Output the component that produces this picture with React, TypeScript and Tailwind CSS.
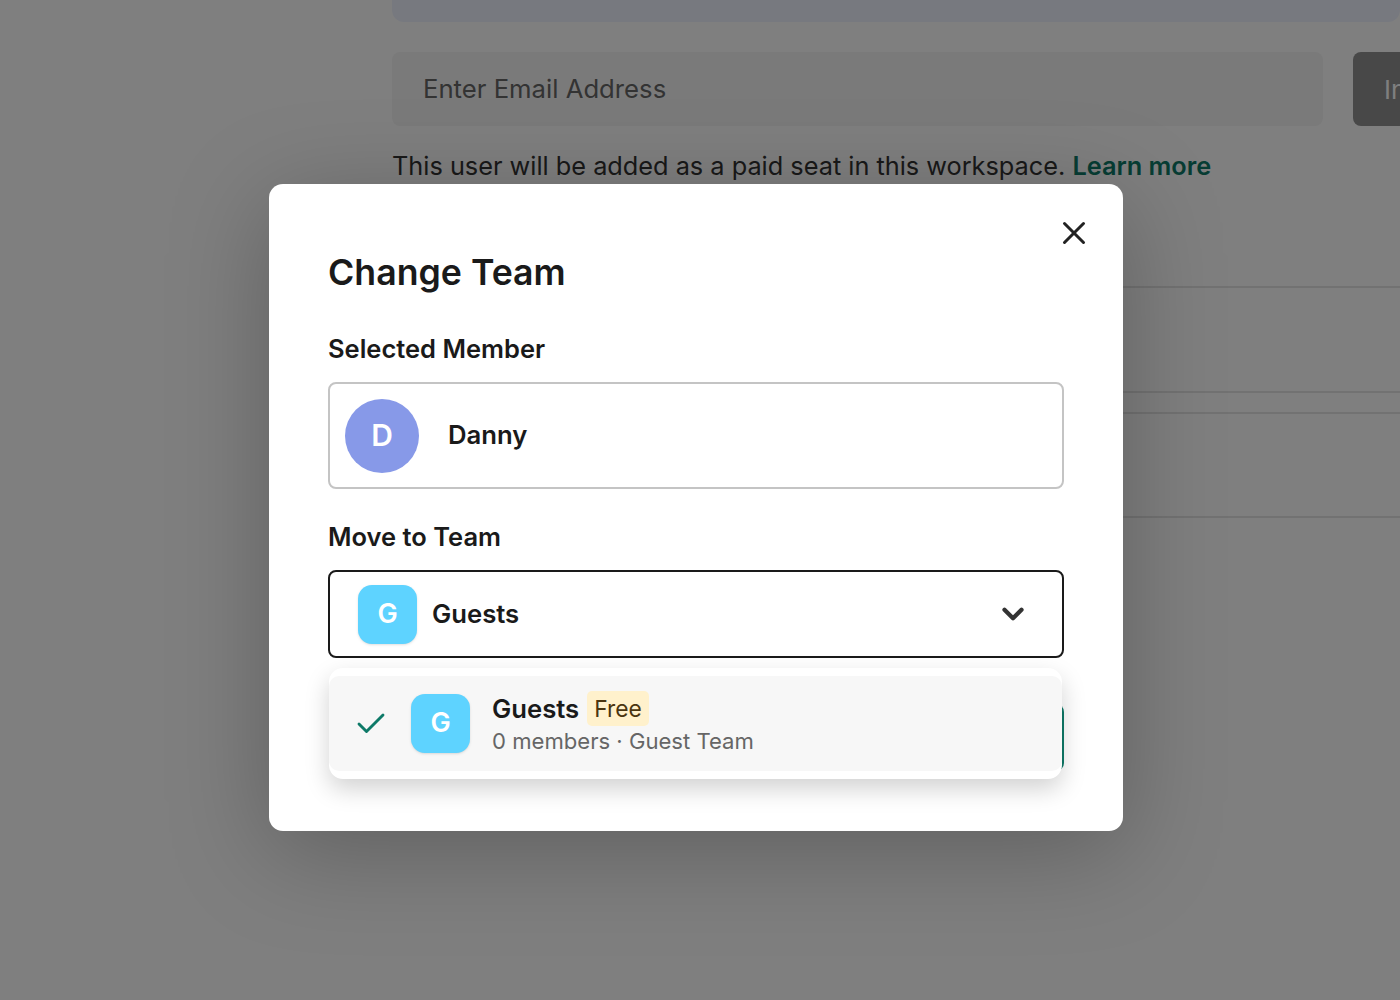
import { Check, ChevronDown, X } from "lucide-react";

const font = { fontFamily: "Inter, 'Liberation Sans', sans-serif" };

function TeamIcon() {
  return (
    <div className="flex h-[59px] w-[59px] shrink-0 items-center justify-center rounded-[14px] bg-[#5ed3ff] text-[27px] font-semibold text-white shadow-sm">
      G
    </div>
  );
}

export default function App() {
  return (
    <div className="relative h-[1000px] w-full overflow-hidden bg-white" style={font}>
      {/* page behind the overlay */}
      <div className="pl-[392px]">
        <div className="h-[22px] rounded-b-[12px] bg-[#eff3ff]" />
        <div className="mt-[30px] flex gap-[30px]">
          <div className="flex h-[74px] w-[931px] shrink-0 items-center rounded-[8px] bg-[#f5f5f5] pl-[31px] text-[25.7px] text-[#666]">
            Enter Email Address
          </div>
          <div className="flex h-[74px] flex-1 items-center overflow-hidden whitespace-nowrap rounded-l-[8px] bg-[#909090] pl-[31px] text-[26px] text-white">
            Invite
          </div>
        </div>
        <p className="mt-[23px] whitespace-nowrap text-[25.3px] leading-[34px] text-[#333]">
          This user will be added as a paid seat in this workspace.{" "}
          <span className="font-semibold text-[#0e7a68]">Learn more</span>
        </p>
        <div className="mt-[103px] h-[107px] border-y-2 border-[#e4e4e4]" />
        <div className="mt-[19px] h-[106px] border-y-2 border-[#e4e4e4]" />
      </div>

      {/* overlay + modal */}
      <div className="absolute inset-0 flex items-center justify-center bg-black/50 pr-2 pt-[15px]">
        <div className="relative h-[647px] w-[854px] rounded-[14px] bg-white px-[59px] pt-[64px] shadow-[0_20px_100px_rgba(0,0,0,0.25)]">
          <button className="absolute right-[30px] top-[30px] text-[#222]">
            <X size={38} strokeWidth={1.9} />
          </button>
          <h2 className="text-[35.7px] font-semibold leading-[48px] text-[#1a1a1a]">Change Team</h2>

          <div className="mt-[36px] text-[25.5px] font-semibold leading-[34px] text-[#1a1a1a]">Selected Member</div>
          <div className="mt-[16px] flex h-[107px] items-center rounded-[8px] border-2 border-[#c4c4c4] pl-[15px]">
            <div className="flex h-[74px] w-[74px] items-center justify-center rounded-full bg-[#8799e8] text-[30px] font-semibold text-white">
              D
            </div>
            <span className="ml-[29px] text-[25.7px] font-semibold text-[#1a1a1a]">Danny</span>
          </div>

          <div className="mt-[31px] text-[25.5px] font-semibold leading-[34px] text-[#1a1a1a]">Move to Team</div>
          <div className="relative mt-[16px]">
            <div className="flex h-[88px] items-center rounded-[8px] border-2 border-[#1a1a1a] pl-[28px] pr-[32px]">
              <TeamIcon />
              <span className="ml-[15px] flex-1 text-[25.7px] font-semibold text-[#1a1a1a]">Guests</span>
              <ChevronDown size={34} strokeWidth={3} className="text-[#333]" />
            </div>

            <div className="ml-[4px] mt-[46px] h-[67px] rounded-[8px] bg-[#0e7a68]" />

            {/* open dropdown */}
            <div className="absolute left-px right-[2px] top-[98px] rounded-[14px] bg-white py-[8px] shadow-[0_10px_24px_rgba(0,0,0,0.18)]">
              <div className="flex h-[95px] items-center rounded-[10px] bg-[#f7f7f7] pl-[24px]">
                <Check size={36} strokeWidth={1.9} className="text-[#0e7a68]" />
                <div className="ml-[22px]">
                  <TeamIcon />
                </div>
                <div className="ml-[22px]">
                  <div className="flex items-center gap-[8px]">
                    <span className="text-[25.7px] font-semibold leading-[34px] text-[#1a1a1a]">Guests</span>
                    <span className="rounded-[5px] bg-[#fff1cc] px-[7px] text-[22.8px] leading-[35px] text-[#4a3510]">Free</span>
                  </div>
                  <div className="text-[22.1px] leading-[30px] text-[#666]">0 members · Guest Team</div>
                </div>
              </div>
            </div>
          </div>
        </div>
      </div>
    </div>
  );
}
